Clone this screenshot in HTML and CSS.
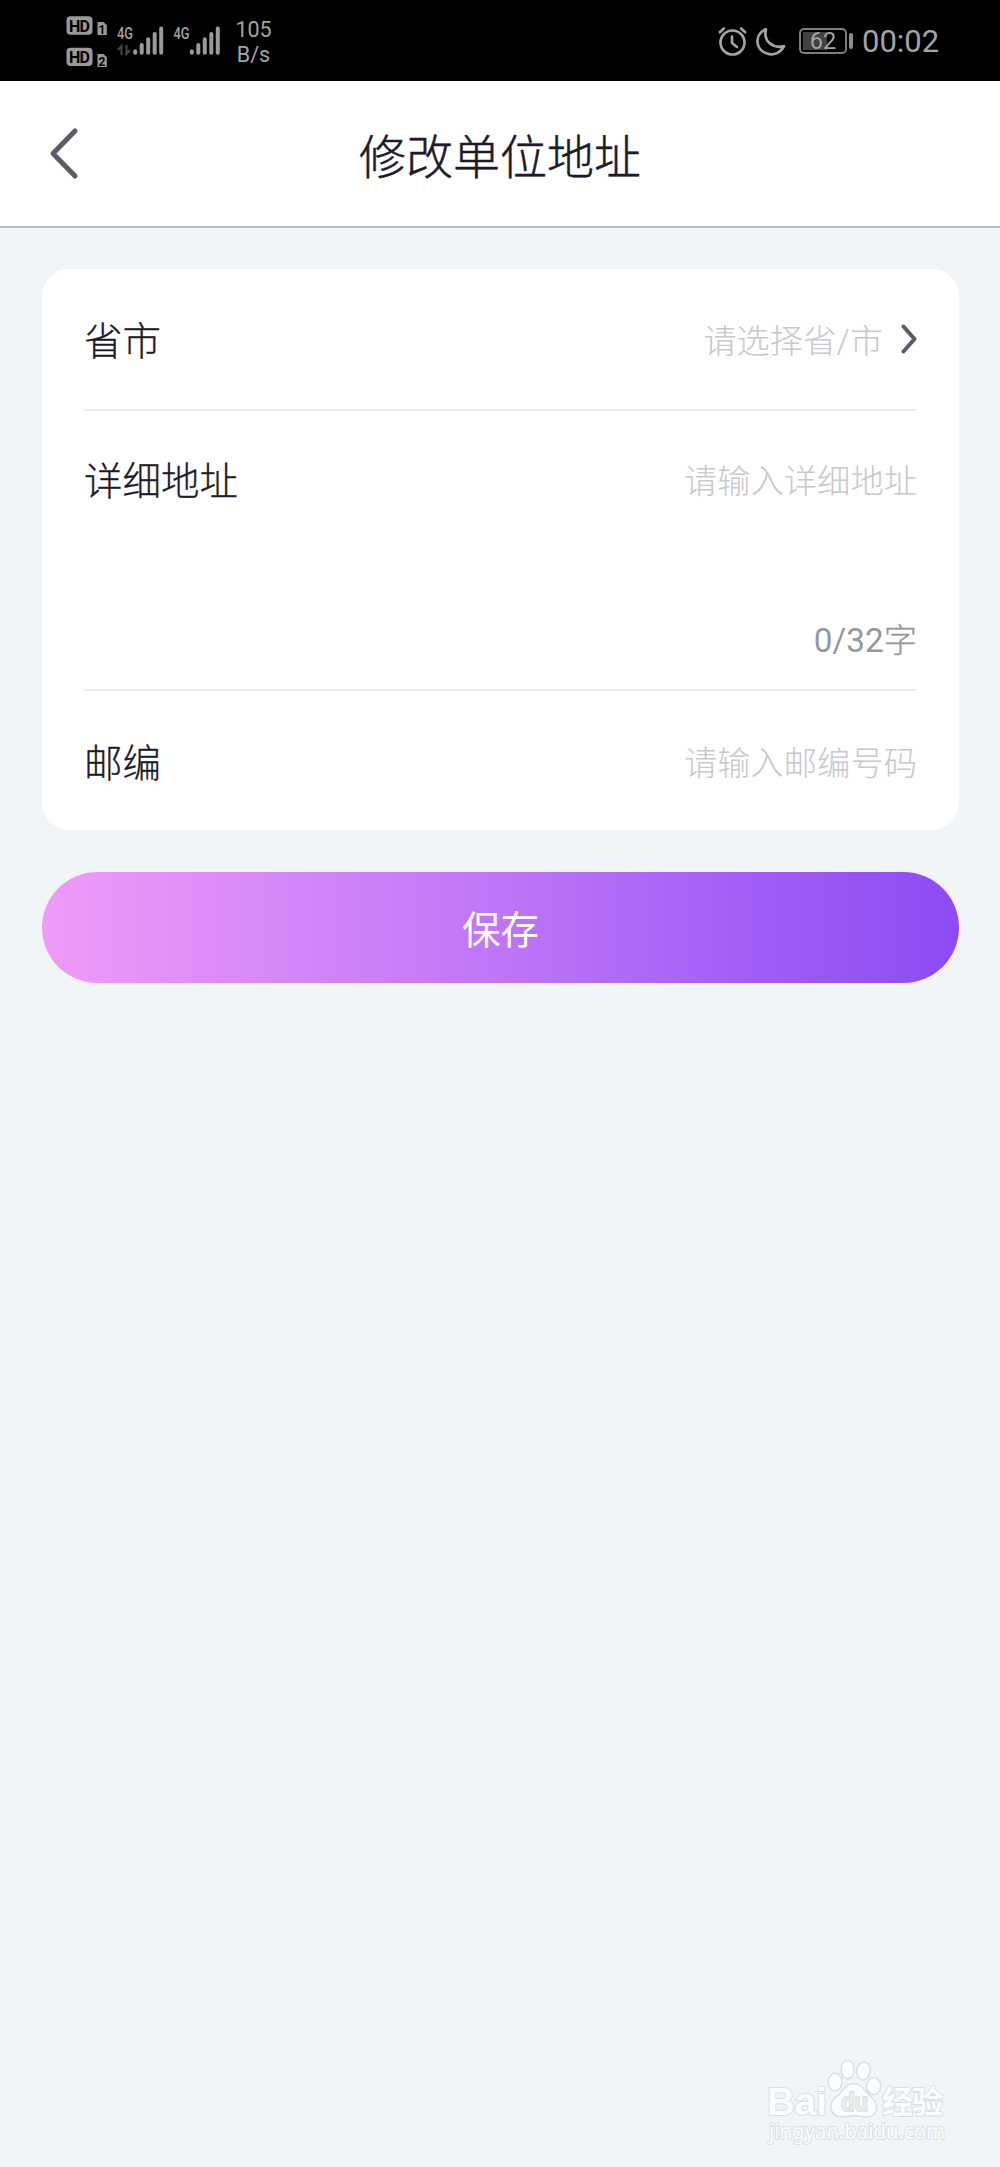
FILE: index.html
```html
<!DOCTYPE html>
<html lang="zh-CN">
<head>
    <meta charset="UTF-8">
    <meta name="viewport" content="width=device-width, initial-scale=1.0">
    <title>修改单位地址</title>
    <link rel="stylesheet" href="styles.css">
</head>
<body>
    <div class="page">
        <div class="status-bar">
            <svg class="status-left" width="170" height="81" viewBox="60 0 170 81">
                <!-- HD badges -->
                <g fill="#9a9a9a">
                    <rect x="66.5" y="16.3" width="26" height="18.4" rx="4"/>
                    <path d="M97.5 22h6l3.3 3.3V35h-9.3z"/>
                    <rect x="66.5" y="47.7" width="26" height="18.4" rx="4"/>
                    <path d="M97.5 54h6l3.3 3.3V67h-9.3z"/>
                </g>
                <g class="hd-text">
                    <text x="79.5" y="31.5" textLength="21">HD</text>
                    <text x="79.5" y="62.9" textLength="21">HD</text>
                    <text class="sim" x="102" y="33.5">1</text>
                    <text class="sim" x="102" y="65.5">2</text>
                </g>
                <!-- signal -->
                <g class="net-text">
                    <text x="117" y="38.8" textLength="16" lengthAdjust="spacingAndGlyphs">4G</text>
                    <text x="173.5" y="38.8" textLength="16" lengthAdjust="spacingAndGlyphs">4G</text>
                </g>
                <path d="M121.5 55v-9l-3.500 4M126.500 45v9l3.500-4" fill="none" stroke="#444" stroke-width="2"/>
                <g stroke="#9a9a9a" stroke-width="4" stroke-linecap="round">
                    <path d="M135.200 51.200v1.600M141.700 45v7.800M148.200 39.200v13.600M154.700 34v18.800M161.200 28.500v24.300"/>
                    <path d="M191.800 51.200v1.600M198.300 45v7.800M204.800 39.200v13.600M211.300 34v18.800M217.800 28.500v24.300"/>
                </g>
            </svg>
            <div class="net-speed"><span>105</span><span>B/s</span></div>
            <svg class="status-icons" width="70" height="40" viewBox="716 20 70 40">
                <g fill="none" stroke="#a3a3a3" stroke-width="2.700" stroke-linecap="round" stroke-linejoin="round">
                    <circle cx="731.500" cy="41.500" r="12"/>
                    <path d="M731 35.500v6.500l5 4M718.800 31.200l4-3.700M744.200 31.200l-4-3.700"/>
                    <path d="M765 28.200C753 33 754 49 766 52.500C773 55 780 51.500 783 45.100C772 48 762 40.500 765 28.200Z"/>
                </g>
            </svg>
            <div class="battery"><span>62</span></div>
            <div class="clock">00:02</div>
        </div>

        <div class="header">
            <svg class="back" width="34" height="56" viewBox="0 0 34 56">
                <path d="M29 6L7 28.500L29 51" fill="none" stroke="#5f5868" stroke-width="5" stroke-linecap="round" stroke-linejoin="round"/>
            </svg>
            <h1>修改单位地址</h1>
        </div>

        <div class="content">
            <div class="card">
                <div class="row">
                    <span class="label">省市</span>
                    <span class="hint">请选择省/市</span>
                    <svg class="arrow" width="17" height="32" viewBox="0 0 17 32">
                        <path d="M3.500 3.500L14.500 16L3.500 28.500" fill="none" stroke="#5f5868" stroke-width="4" stroke-linecap="round" stroke-linejoin="round"/>
                    </svg>
                </div>
                <div class="row row-address">
                    <span class="label">详细地址</span>
                    <div class="address">
                        <span class="hint">请输入详细地址</span>
                        <span class="count">0/32<span class="unit">字</span></span>
                    </div>
                </div>
                <div class="row row-postcode">
                    <span class="label">邮编</span>
                    <span class="hint">请输入邮编号码</span>
                </div>
            </div>
            <button class="save">保存</button>
        </div>

        <svg class="watermark" width="200" height="100" viewBox="760 2050 200 100">
            <g fill="#fafcfe" stroke="#dcdfe2" stroke-width="1.500">
                <ellipse cx="835" cy="2082" rx="7" ry="8.700"/>
                <ellipse cx="847.700" cy="2069.500" rx="6.700" ry="9.300"/>
                <ellipse cx="863.500" cy="2071" rx="6.700" ry="9" transform="rotate(10 863.500 2071)"/>
                <ellipse cx="873.700" cy="2086" rx="7" ry="8.500"/>
                <path d="M853.500 2083.500C845 2083.500 842 2093 836 2097C828 2103 829 2117 842 2117C847 2117 850 2115.500 854 2115.500C858 2115.500 861 2117 866 2117C879 2117 879 2103 871 2097C865 2092 862 2083.500 853.500 2083.500Z"/>
            </g>
            <g class="mark-text">
                <text class="mark-bai" x="767" y="2115" textLength="60" lengthAdjust="spacingAndGlyphs">Bai</text>
                <text class="mark-du" x="841" y="2111" textLength="27" lengthAdjust="spacingAndGlyphs">du</text>
                <text class="mark-cn" x="882" y="2112.500" textLength="61">经验</text>
                <text class="mark-url" x="769" y="2139" textLength="176" lengthAdjust="spacingAndGlyphs">jingyan.baidu.com</text>
            </g>
        </svg>
    </div>
</body>
</html>
```
FILE: styles.css
```css
* {
    box-sizing: border-box;
}

body {
    margin: 0;
    background-color: #f1f5f8;
    font-family: Roboto, "Noto Sans CJK SC", sans-serif;
    color: #1f1a28;
}

.page {
    position: relative;
    width: 1000px;
    height: 2167px;
    overflow: hidden;
}

/* status bar */
.status-bar {
    display: flex;
    align-items: center;
    height: 81px;
    padding: 0 60px;
    background-color: #000;
    color: #a3a3a3;
}

.hd-text {
    font-family: Roboto, sans-serif;
    font-size: 16px;
    font-weight: 700;
    fill: #000;
    text-anchor: middle;
}

.hd-text .sim {
    font-size: 12px;
}

.net-text {
    font-family: Roboto, sans-serif;
    font-size: 17px;
    font-weight: 500;
    fill: #a3a3a3;
}

.net-speed {
    display: flex;
    flex-direction: column;
    align-items: center;
    width: 47px;
    font-size: 21.5px;
    line-height: 25px;
    padding-top: 2px;
}

.status-icons {
    margin-left: auto;
}

.battery {
    position: relative;
    width: 48px;
    height: 26px;
    margin-left: 12px;
    border: 2px solid #7d7d7d;
    border-radius: 5px;
    background: linear-gradient(90deg, #414141 60%, #000 60%);
    background-clip: content-box;
    padding: 2px;
    font-size: 23.5px;
    line-height: 19px;
    text-align: center;
}

.battery::after {
    content: "";
    position: absolute;
    top: 3px;
    right: -8px;
    width: 4px;
    height: 16px;
    border-radius: 2px;
    background-color: #8c8c8c;
}

.clock {
    width: 78px;
    margin-left: 15px;
    font-size: 31px;
    line-height: 40px;
    padding-top: 3px;
    white-space: nowrap;
}

/* title bar */
.header {
    display: flex;
    align-items: center;
    height: 147px;
    padding: 0 46px 2px;
    background-color: #fff;
    border-bottom: 2px solid #b9c0c3;
}

.header h1 {
    flex: 1;
    margin: 0 34px 0 0;
    padding-top: 10px;
    font-size: 47px;
    font-weight: 300;
    line-height: 60px;
    text-align: center;
    -webkit-text-stroke: 0.5px #1f1a28;
}

/* form */
.content {
    padding: 41px 41px 41px 42px;
}

.card {
    height: 561px;
    padding: 0 42px;
    border-radius: 27px;
    background-color: #fff;
}

.row {
    display: flex;
    align-items: center;
    justify-content: space-between;
    height: 140px;
}

.row + .row {
    border-top: 2px solid #ebebed;
}

.label {
    padding-top: 5px;
    font-size: 38.5px;
    font-weight: 300;
    line-height: 56px;
    -webkit-text-stroke: 0.3px #1f1a28;
}

.hint {
    padding-top: 6px;
    font-size: 33.3px;
    font-weight: 300;
    line-height: 48px;
    color: #c8c8cd;
}

.row .hint {
    margin-left: auto;
}

.arrow {
    margin-left: 17px;
}

.row-address {
    align-items: flex-start;
    height: 280px;
    padding-top: 38px;
}

.row-postcode {
    padding-top: 2px;
}

.address {
    display: flex;
    flex-direction: column;
    align-items: flex-end;
    gap: 111px;
    padding-top: 3px;
}

.count {
    font-size: 33.3px;
    line-height: 48px;
    color: #97979d;
}

.count .unit {
    font-weight: 300;
    -webkit-text-stroke: 0.3px #97979d;
}

.save {
    display: block;
    width: 100%;
    height: 111px;
    margin-top: 42px;
    padding: 0 0 2px;
    border: none;
    border-radius: 56px;
    background: linear-gradient(90deg, #ee9bf9, #c47af8 44%, #a55ff7 75%, #8c4bf3);
    color: #fff;
    font-family: inherit;
    font-size: 38.5px;
}

/* corner mark */
.watermark {
    position: absolute;
    left: 760px;
    top: 2050px;
}

.mark-text {
    font-family: "Liberation Sans", "Noto Sans CJK SC", sans-serif;
    fill: #fafcfe;
    stroke: #dcdfe2;
    stroke-width: 2px;
    paint-order: stroke;
}

.mark-bai {
    font-size: 39px;
    font-weight: 700;
}

.mark-du {
    font-size: 26px;
    font-weight: 700;
    fill: #e8ebee;
}

.mark-cn {
    font-size: 31px;
    font-weight: 700;
}

.mark-url {
    font-family: "Noto Sans", sans-serif;
    font-size: 21px;
}
```
